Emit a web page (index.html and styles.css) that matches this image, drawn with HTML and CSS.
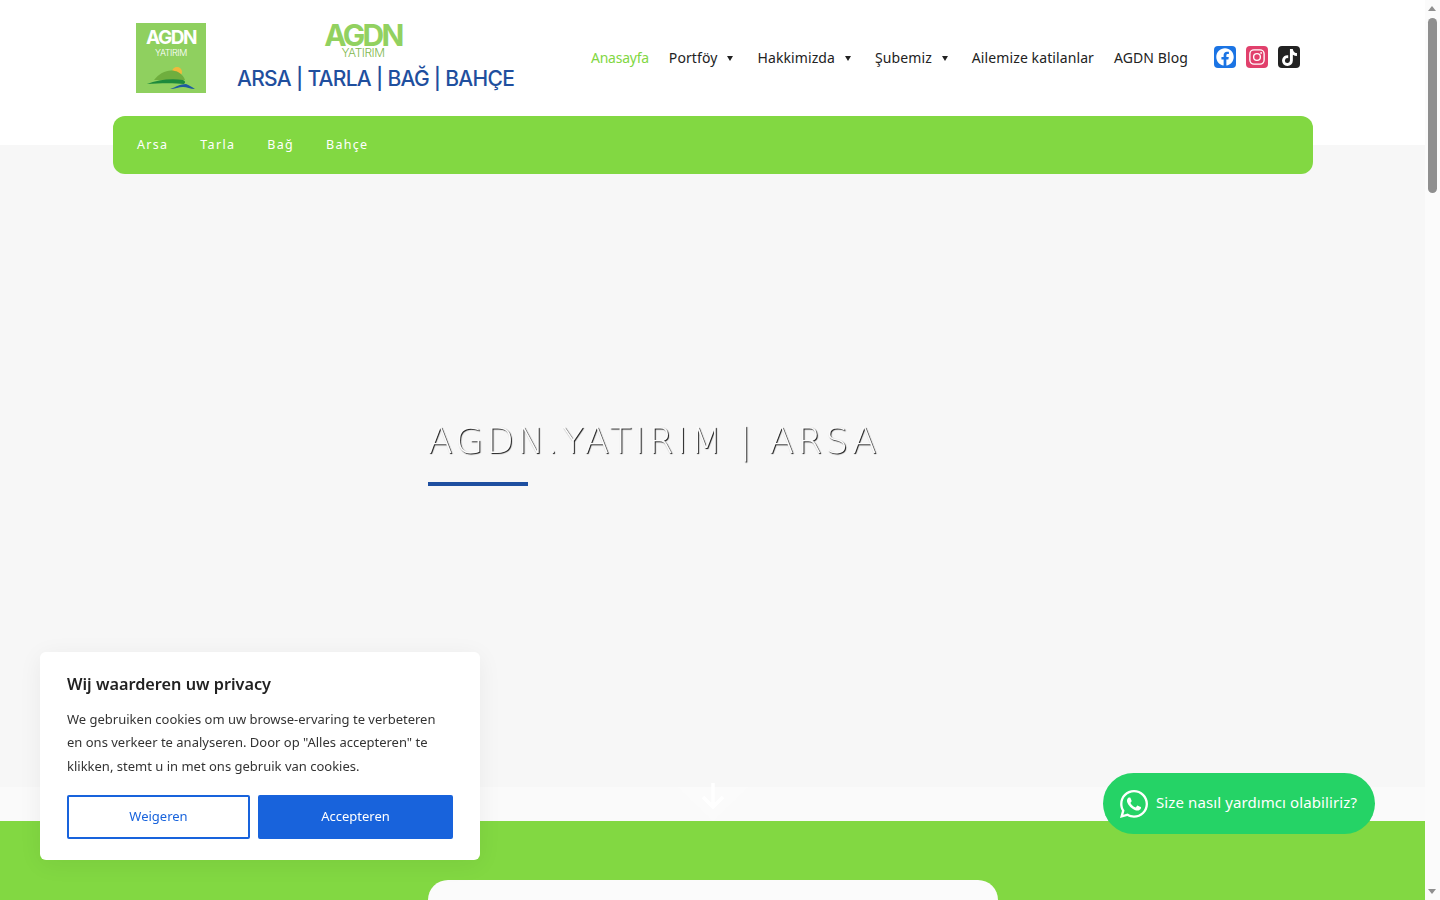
FILE: index.html
```html
<!DOCTYPE html>
<html lang="tr">
<head>
<meta charset="utf-8">
<title>AGDN Yatırım</title>
<link rel="stylesheet" href="styles.css">
</head>
<body>
<header class="header">
  <div class="brand">
    <div class="logo-square">
      <span class="logo-square-name">AGDN</span>
      <span class="logo-square-sub">YATIRIM</span>
      <svg class="logo-land" viewBox="0 0 50 24" width="50" height="24" aria-hidden="true">
        <circle cx="31" cy="6" r="5" fill="#f0b93c"/>
        <path d="M8 14C14 6 24 2 32 6c4 2 6 5 7 8z" fill="#6fae3e"/>
        <path d="M1 18c10-4 24-6 36-4 2 1 3 2 1 4-8-1-24-1-37 0z" fill="#1d8a3c"/>
        <path d="M24 23c6-2 10-5 16-5 3 1 6 3 9 5-5 0-8-2-12-2-4 0-8 2-13 2z" fill="#1e5aa0"/>
      </svg>
    </div>
    <div class="logo-wide">
      <span class="logo-wide-name">AGDN</span>
      <span class="logo-wide-sub">YATIRIM</span>
      <span class="logo-wide-line">ARSA | TARLA | BAĞ | BAHÇE</span>
    </div>
  </div>
  <nav class="menu">
    <a class="menu-item menu-item-active">Anasayfa</a>
    <a class="menu-item">Portföy<span class="caret"></span></a>
    <a class="menu-item">Hakkimizda<span class="caret"></span></a>
    <a class="menu-item">Şubemiz<span class="caret"></span></a>
    <a class="menu-item">Ailemize katilanlar</a>
    <a class="menu-item">AGDN Blog</a>
  </nav>
  <div class="socials">
    <span class="social social-fb">
      <svg viewBox="0 0 512 512" width="18" height="18" aria-hidden="true"><path fill="#fff" d="M504 256C504 119 393 8 256 8S8 119 8 256c0 123.780 90.690 226.380 209.250 245V327.690h-63V256h63v-54.640c0-62.150 37-96.480 93.670-96.480 27.140 0 55.520 4.840 55.520 4.840v61h-31.280c-30.800 0-40.420 19.120-40.420 38.730V256h68.780l-11 71.690h-57.780V501C413.310 482.380 504 379.780 504 256z"/></svg>
    </span>
    <span class="social social-ig">
      <svg viewBox="0 0 24 24" width="18" height="18" aria-hidden="true"><rect x="2.500" y="2.500" width="19" height="19" rx="5.500" fill="none" stroke="#fff" stroke-width="1.800"/><circle cx="12" cy="12" r="4.500" fill="none" stroke="#fff" stroke-width="1.800"/><circle cx="17.500" cy="6.500" r="1.200" fill="#fff"/></svg>
    </span>
    <span class="social social-tt">
      <svg viewBox="0 0 448 512" width="15" height="17" aria-hidden="true"><path fill="#fff" d="M448 209.900a210.100 210.100 0 0 1 -122.800-39.300V349.400A162.600 162.600 0 1 1 185 188.300V278.200a74.600 74.600 0 1 0 52.200 71.200V0l88 0a121.200 121.200 0 0 0 1.900 22.200h0A122.200 122.200 0 0 0 381 102.400a121.400 121.400 0 0 0 67 20.100z"/></svg>
    </span>
  </div>
</header>
<div class="subnav-band">
  <nav class="subnav">
    <a class="subnav-item">Arsa</a>
    <a class="subnav-item">Tarla</a>
    <a class="subnav-item">Bağ</a>
    <a class="subnav-item">Bahçe</a>
  </nav>
</div>
<main>
  <section class="hero">
    <div class="hero-inner">
      <h1 class="hero-title">AGDN.YATIRIM | ARSA</h1>
      <div class="hero-rule"></div>
    </div>
  </section>
  <div class="divider">
    <div class="notch"></div>
    <svg class="down-arrow" viewBox="0 0 24 28" width="24" height="28" aria-hidden="true"><path d="M12 1v24M2 15l10 10 10-10" fill="none" stroke="#fff" stroke-width="3.500"/></svg>
  </div>
  <section class="green">
    <div class="card"></div>
  </section>
</main>
<aside class="cookie">
  <h2 class="cookie-title">Wij waarderen uw privacy</h2>
  <p class="cookie-text">We gebruiken cookies om uw browse-ervaring te verbeteren en ons verkeer te analyseren. Door op "Alles accepteren" te klikken, stemt u in met ons gebruik van cookies.</p>
  <div class="cookie-actions">
    <button class="btn btn-outline">Weigeren</button>
    <button class="btn btn-solid">Accepteren</button>
  </div>
</aside>
<a class="whatsapp">
  <svg viewBox="0 0 448 512" width="28" height="32" aria-hidden="true"><path fill="#fff" d="M380.900 97.100C339 55.100 283.200 32 223.900 32c-122.400 0-222 99.600-222 222 0 39.100 10.200 77.300 29.600 111L0 480l117.700-30.900c32.400 17.700 68.900 27 106.100 27h.1c122.300 0 224.100-99.600 224.100-222 0-59.300-25.200-115-67.100-157zm-157 341.600c-33.200 0-65.700-8.900-94-25.700l-6.700-4-69.800 18.300L72 359.200l-4.400-7c-18.500-29.400-28.200-63.300-28.200-98.200 0-101.700 82.800-184.500 184.600-184.500 49.300 0 95.600 19.200 130.400 54.100 34.800 34.900 56.200 81.200 56.100 130.500 0 101.800-84.900 184.600-186.600 184.600zm101.200-138.200c-5.500-2.800-32.800-16.200-37.900-18-5.100-1.900-8.800-2.800-12.500 2.800-3.700 5.600-14.300 18-17.600 21.800-3.200 3.700-6.500 4.200-12 1.400-32.600-16.300-54-29.100-75.500-66-5.700-9.800 5.700-9.100 16.300-30.300 1.800-3.700.9-6.900-.5-9.700-1.400-2.800-12.500-30.100-17.100-41.200-4.500-10.800-9.100-9.300-12.500-9.500-3.200-.2-6.900-.2-10.600-.2-3.700 0-9.700 1.400-14.800 6.900-5.100 5.600-19.400 19-19.400 46.300 0 27.300 19.900 53.700 22.600 57.400 2.800 3.700 39.100 59.700 94.800 83.800 35.200 15.200 49 16.500 66.600 13.900 10.700-1.600 32.800-13.400 37.400-26.400 4.600-13 4.600-24.100 3.200-26.400-1.300-2.500-5-3.900-10.500-6.600z"/></svg>
  <span class="whatsapp-label">Size nasıl yardımcı olabiliriz?</span>
</a>
<div class="scrollbar">
  <span class="scroll-up"></span>
  <span class="scroll-thumb"></span>
  <span class="scroll-down"></span>
</div>
</body>
</html>
```

FILE: styles.css
```css
* { box-sizing: border-box; }
html, body { margin: 0; padding: 0; }
body {
  font-family: "Noto Sans", sans-serif;
  background: #fff;
  color: #222;
  width: 1425px;
  height: 900px;
  overflow: hidden;
}
a { text-decoration: none; color: inherit; }

.header {
  height: 116px;
  background: #fff;
  display: flex;
  align-items: flex-start;
  padding-left: 136px;
}
.brand { display: flex; align-items: flex-start; padding-top: 23px; width: 445px; flex: none; }
.logo-square {
  width: 70px; height: 70px; flex: none;
  background: #8fd05f;
  color: #fff;
  display: flex; flex-direction: column; align-items: center;
  padding-top: 5px;
  font-family: Inter, sans-serif;
}
.logo-square-name { font-size: 19px; font-weight: 700; letter-spacing: -1.500px; line-height: 20px; }
.logo-square-sub { font-size: 9px; font-weight: 300; letter-spacing: -0.400px; line-height: 9px; }
.logo-land { margin-top: 9px; }
.logo-wide {
  margin-left: 31px;
  width: 278px;
  display: flex; flex-direction: column; align-items: center;
  font-family: Inter, sans-serif;
}
.logo-wide-name { font-size: 30px; font-weight: 700; letter-spacing: -2.700px; line-height: 24px; color: #92d160; margin-right: 26px; }
.logo-wide-sub { font-size: 12px; font-weight: 300; letter-spacing: -0.500px; line-height: 12px; color: #7fb850; margin-right: 26px; }
.logo-wide-line {
  font-size: 21px; font-weight: 500; color: #1f4f9e; white-space: nowrap; line-height: 28px;
  margin-top: 6px; letter-spacing: -0.700px; align-self: flex-start;
}

.menu { display: flex; align-items: center; height: 115px; flex: none; }
.menu-item { font-size: 14px; color: #222; padding: 0 10px; display: flex; align-items: center; letter-spacing: .1px; }
.menu-item-active { color: #81d742; letter-spacing: -.25px; }
.caret {
  width: 0; height: 0; margin: 2px 4px 0 10px;
  border-left: 3.500px solid transparent; border-right: 3.500px solid transparent; border-top: 5px solid #222;
}
.socials { display: flex; gap: 10px; margin-left: 16px; padding-top: 46px; }
.social {
  width: 22px; height: 22px; border-radius: 4px;
  display: flex; align-items: center; justify-content: center;
}
.social-fb { background: #1b74e4; }
.social-ig { background: #e1406c; }
.social-tt { background: #222; }

.subnav-band { background: linear-gradient(#fff 29px, #f7f7f7 29px); }
.subnav {
  margin-left: 113px; width: 1200px; height: 58px;
  background: #82d842; border-radius: 12px;
  display: flex; align-items: center; gap: 32px;
  padding: 0 0 2px 24px;
}
.subnav-item { color: #fff; font-size: 12.500px; letter-spacing: 1.300px; }

.hero { height: 613px; background: #f7f7f7; }
.hero-inner { margin-left: 428px; padding-top: 244px; }
.hero-title {
  margin: 0;
  font-family: "DejaVu Sans", sans-serif;
  font-weight: 200;
  font-size: 36px;
  line-height: 46px;
  letter-spacing: 3.200px;
  color: #fbfbfb;
  text-shadow: 1px 1px 1px #111;
  will-change: transform;
}
.hero-rule { width: 100px; height: 4px; background: #1e4fa0; margin-top: 18px; }

.divider { height: 34px; background: #fafafa; position: relative; }
.notch {
  position: absolute; left: 678px; top: 0; width: 70px; height: 34px;
  background: #fbfbfb;
  clip-path: polygon(0 0, 100% 0, 50% 100%);
}
.down-arrow { position: absolute; left: 701px; top: -5px; }

.green { background: #82d842; padding-top: 59px; }
.card { margin-left: 428px; width: 570px; height: 200px; background: #fbfbfb; border-radius: 20px; }

.cookie {
  position: fixed; left: 40px; top: 652px; width: 440px; height: 208px;
  background: #fff; border-radius: 6px;
  box-shadow: 0 4px 24px rgba(0,0,0,.06);
  padding: 20px 27px 21px;
  color: #212121;
}
.cookie-title { margin: 0; font-size: 16.250px; line-height: 24px; font-weight: 600; }
.cookie-text { margin: 11.700px 0 0; font-size: 13px; line-height: 23.500px; color: #333; }
.cookie-actions { display: flex; gap: 8px; margin-top: 16.800px; }
.btn {
  height: 44px; font: inherit; font-size: 13px; border-radius: 2px; cursor: pointer; padding: 0 0 2px;
}
.btn-outline { width: 183px; background: #fff; border: 2px solid #1863dc; color: #1863dc; }
.btn-solid { width: 195px; background: #1863dc; border: 2px solid #1863dc; color: #fff; }

.whatsapp {
  position: fixed; left: 1103px; top: 773px; width: 272px; height: 61px;
  border-radius: 31px; background: #25d366; color: #fff;
  display: flex; align-items: center; padding-left: 17px; gap: 8px;
}
.whatsapp-label { font-size: 15px; letter-spacing: .1px; margin-bottom: 3px; }

.scrollbar {
  position: fixed; right: 0; top: 0; width: 15px; height: 900px;
  background: #fbfbfb;
}
.scroll-thumb {
  position: absolute; left: 3px; top: 18px; width: 9px; height: 175px;
  background: #8f8f8f; border-radius: 5px;
}
.scroll-up, .scroll-down {
  position: absolute; left: 3px; width: 0; height: 0;
  border-left: 4.500px solid transparent; border-right: 4.500px solid transparent;
}
.scroll-up { top: 6px; border-bottom: 5px solid #8f8f8f; }
.scroll-down { bottom: 6px; border-top: 5px solid #8f8f8f; }
```
